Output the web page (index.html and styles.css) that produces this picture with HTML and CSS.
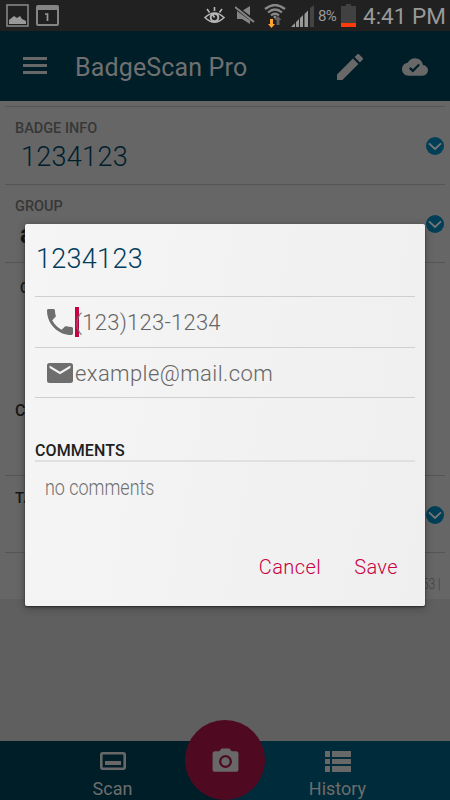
FILE: index.html
```html
<!DOCTYPE html>
<html lang="en">
<head>
    <meta charset="UTF-8">
    <meta name="viewport" content="width=device-width, initial-scale=1.0">
    <title>BadgeScan Pro</title>
    <link rel="stylesheet" href="styles.css">
</head>
<body>
    <div class="status-bar">
        <div class="status-left">
            <svg width="23" height="23" viewBox="0 0 23 23">
                <rect x="1" y="1" width="21" height="21" fill="none" stroke="#858585" stroke-width="1.6"/>
                <path d="M3 20v-4l5-4 3 2 3-2 2 3 4 2v3z" fill="#999"/>
            </svg>
            <svg width="23" height="21" viewBox="0 0 23 21">
                <rect x="1" y="1" width="21" height="19" rx="1" fill="none" stroke="#858585" stroke-width="2"/>
                <path d="M1 1h21v4H1z" fill="#858585"/>
                <path d="M9 9h2.500v7" fill="none" stroke="#999" stroke-width="1.700"/>
            </svg>
        </div>
        <div class="status-right">
            <svg class="eye" width="21" height="18" viewBox="0 0 21 18">
                <g fill="none" stroke="#b5b5b5" stroke-width="1.600">
                    <path d="M1 10.500Q10.500 1.500 20 10.500Q10.500 20 1 10.500z"/>
                    <circle cx="10.500" cy="10.500" r="3.800" stroke-width="2"/>
                    <path d="M10.500 10.500l-2-3M10.500 4V0M5.500 5.500L3 2M15.500 5.500L18 2"/>
                </g>
            </svg>
            <svg class="mute" width="20" height="18" viewBox="0 0 20 18">
                <path d="M2 5h5l8-5v18l-8-5H2z" fill="#858585"/>
                <path d="M0 1l19 14" stroke="#212121" stroke-width="4"/>
                <path d="M0 1l19 15" stroke="#858585" stroke-width="2"/>
            </svg>
            <svg class="wifi" width="22" height="24" viewBox="0 0 22 24">
                <g fill="none" stroke="#888" stroke-width="2.300">
                    <path d="M1 5q10-8 20 0M4 8.500q7-6 14 0M7 11.500q4-3.500 8 0"/>
                </g>
                <circle cx="11" cy="13" r="1.500" fill="#888"/>
                <path d="M6 15h3v5h2l-3.500 4L4 20h2z" fill="#ffa42d"/>
                <path d="M12.500 21v-5h-2l3.500-4 3.500 4h-2v5z" fill="#606060"/>
            </svg>
            <svg class="signal" width="23" height="22" viewBox="0 0 23 22">
                <path d="M0 22l4-4v4zM5 17l3-3v8H5zM9 13l3-3v12H9zM13.500 9l3.500-3.500V22h-3.500z" fill="#999"/>
                <path d="M19 3l4-3v22h-4z" fill="#444"/>
            </svg>
            <span class="percent">8%</span>
            <svg class="battery" width="15" height="23" viewBox="0 0 15 23">
                <path d="M5 0h5v2h5v21H0V2h5z" fill="#414141"/>
                <path d="M0 19h15v4H0z" fill="#ff3b0a"/>
            </svg>
            <span class="clock">4:41 PM</span>
        </div>
    </div>

    <header class="app-bar">
        <svg class="menu-icon" width="24" height="17" viewBox="0 0 24 17">
            <path d="M0 0h24v3H0zM0 7h24v3H0zM0 14h24v3H0z" fill="#686868"/>
        </svg>
        <h1>BadgeScan Pro</h1>
        <svg class="edit-icon" width="26" height="26" viewBox="3 3 18 18">
            <path d="M3 17.250V21h3.750L17.810 9.940l-3.750-3.750L3 17.250zM20.710 7.040a1 1 0 0 0 0-1.410l-2.340-2.340a1 1 0 0 0-1.410 0l-1.830 1.830 3.750 3.750 1.830-1.830z" fill="#686868"/>
        </svg>
        <svg class="cloud-icon" width="26" height="26" viewBox="0 0 24 24">
            <path d="M19.350 10.040C18.670 6.590 15.640 4 12 4 9.110 4 6.600 5.640 5.350 8.040 2.340 8.360 0 10.910 0 14c0 3.310 2.690 6 6 6h13c2.760 0 5-2.240 5-5 0-2.640-2.050-4.780-4.650-4.960zM10 17l-3.500-3.500 1.410-1.410L10 14.170 15.180 9l1.410 1.410L10 17z" fill="#686868"/>
        </svg>
    </header>

    <main class="content">
        <section class="row badge-row">
            <div>
                <div class="row-label">BADGE INFO</div>
                <div class="badge-number">1234123</div>
            </div>
            <svg class="chevron" width="18" height="18" viewBox="0 0 18 18"><circle cx="9" cy="9" r="9" fill="#003f57"/><path d="M3 6.300L9 12l6-5.700" fill="none" stroke="#777" stroke-width="1.800"/></svg>
        </section>
        <section class="row group-row">
            <div>
                <div class="row-label">GROUP</div>
                <div class="group-name">a</div>
            </div>
            <svg class="chevron" width="18" height="18" viewBox="0 0 18 18"><circle cx="9" cy="9" r="9" fill="#003f57"/><path d="M3 6.300L9 12l6-5.700" fill="none" stroke="#777" stroke-width="1.800"/></svg>
        </section>
        <section class="row contact-row">
            <div>
                <div class="contact-label">C</div>
                <div class="comment-label">C</div>
            </div>
        </section>
        <section class="row tag-row">
            <div class="tag-label">TA</div>
            <svg class="chevron" width="18" height="18" viewBox="0 0 18 18"><circle cx="9" cy="9" r="9" fill="#003f57"/><path d="M3 6.300L9 12l6-5.700" fill="none" stroke="#777" stroke-width="1.800"/></svg>
        </section>
        <div class="timestamp"><span>53 |</span></div>
    </main>

    <nav class="tabs">
        <div class="tab scan">
            <svg width="26" height="18" viewBox="0 0 26 18">
                <rect x="1.300" y="1.300" width="23.400" height="15.400" rx="1.500" fill="none" stroke="#686868" stroke-width="2.600"/>
                <path d="M5 9h16v4H5z" fill="#686868"/>
            </svg>
            <span>Scan</span>
        </div>
        <div class="tab history">
            <svg width="26" height="21" viewBox="0 0 26 21">
                <path d="M0 0h5v6H0zM7 0h19v6H7zM0 8h5v5H0zM7 8h19v5H7zM0 15h5v6H0zM7 15h19v6H7z" fill="#686868"/>
            </svg>
            <span>History</span>
        </div>
        <div class="camera">
            <svg width="31" height="31" viewBox="0 0 24 24">
                <path d="M9 2L7.170 4H4a2 2 0 0 0-2 2v12a2 2 0 0 0 2 2h16a2 2 0 0 0 2-2V6a2 2 0 0 0-2-2h-3.170L15 2zM12 17a5 5 0 1 1 0-10 5 5 0 0 1 0 10z" fill="#686868" fill-rule="evenodd"/>
                <circle cx="12" cy="12" r="3.200" fill="#686868"/>
            </svg>
        </div>
    </nav>

    <div class="dialog">
        <h2>1234123</h2>
        <div class="field">
            <svg width="26" height="26" viewBox="3 3 18 18">
                <path d="M6.620 10.790c1.440 2.830 3.760 5.140 6.590 6.590l2.200-2.200c.27-.27.67-.36 1.020-.24 1.120.37 2.330.57 3.570.57.55 0 1 .45 1 1V20c0 .55-.45 1-1 1-9.390 0-17-7.610-17-17 0-.55.45-1 1-1h3.500c.55 0 1 .45 1 1 0 1.250.2 2.450.57 3.570.11.35.03.74-.25 1.020l-2.200 2.200z" fill="#6e6e6e"/>
            </svg>
            <span class="value phone">(123)123-1234</span>
        </div>
        <div class="field mail">
            <svg width="26" height="20" viewBox="2 4 20 16" preserveAspectRatio="none">
                <path d="M20 4H4a2 2 0 0 0-2 2v12a2 2 0 0 0 2 2h16a2 2 0 0 0 2-2V6a2 2 0 0 0-2-2zm0 4l-8 5-8-5V6l8 5 8-5v2z" fill="#6e6e6e"/>
            </svg>
            <span class="value">example@mail.com</span>
        </div>
        <h3>COMMENTS</h3>
        <p><span>no comments</span></p>
        <div class="actions">
            <span>Cancel</span>
            <span>Save</span>
        </div>
    </div>
</body>
</html>
```

FILE: styles.css
```css
:root {
    --bar: #001e28;
    --page: #666666;
    --icon: #686868;
    --line: #555555;
    --accent: #c90042;
}

* {
    margin: 0;
    padding: 0;
    box-sizing: border-box;
}

body {
    width: 450px;
    height: 800px;
    display: flex;
    flex-direction: column;
    position: relative;
    overflow: hidden;
    background: #5f5f5f;
    font-family: Roboto, sans-serif;
}

svg {
    display: block;
    flex-shrink: 0;
}

/* phone status bar */
.status-bar {
    height: 31px;
    display: flex;
    justify-content: space-between;
    padding: 4px 6px 0 6px;
    background: #212121;
    color: #999;
}

.status-left {
    display: flex;
    gap: 7px;
}

.status-left svg + svg {
    margin-top: 1px;
}

.status-right {
    display: flex;
}

.eye {
    margin: 3px 10px 0 0;
}

.mute {
    margin: 2px 9px 0 0;
}

.wifi {
    margin-right: 5px;
}

.signal {
    margin: 1px 4px 0 0;
}

.percent {
    width: 23px;
    font-size: 15px;
    line-height: 25px;
    letter-spacing: -0.6px;
    white-space: nowrap;
}

.clock {
    width: 81px;
    margin-left: 7px;
    font-size: 22.5px;
    line-height: 24px;
    white-space: nowrap;
}

/* header */
.app-bar {
    height: 70px;
    display: flex;
    align-items: center;
    padding: 0 22px 0 23px;
    background: var(--bar);
    color: #707070;
}

.menu-icon {
    margin: -1px 28px 0 0;
}

.app-bar h1 {
    flex: 1;
    font-size: 25px;
    font-weight: 400;
    line-height: 30px;
    letter-spacing: 0.15px;
    padding-top: 3px;
}

.edit-icon {
    margin: 1px 39px 0 0;
}

.cloud-icon {
    margin-top: 1px;
}

/* badge details */
.content {
    height: 498px;
    padding: 5px 5px 0;
    background: var(--page);
}

.row {
    display: flex;
    justify-content: space-between;
    padding: 0 1px 0 10px;
    border-top: 1px solid var(--line);
}

.badge-row,
.group-row {
    height: 78px;
}

.row-label {
    margin-top: 13px;
    color: #373737;
    font-size: 14.5px;
    font-weight: 500;
    line-height: 17px;
}

.badge-number {
    padding-left: 6px;
    color: #001e2c;
    font-size: 27px;
    font-weight: 350;
    line-height: 41px;
    letter-spacing: 0.3px;
}

.chevron {
    margin-top: 30px;
}

.group-name {
    padding-left: 5px;
    color: #161616;
    font-size: 25px;
    font-weight: 700;
    line-height: 39px;
}

.contact-row {
    height: 213px;
    color: #171717;
    font-size: 16px;
    font-weight: 500;
}

.contact-label {
    padding: 16px 0 0 5px;
    font-size: 14px;
    line-height: 19px;
}

.comment-label {
    padding-top: 103px;
    line-height: 20px;
}

.tag-row {
    height: 77px;
}

.tag-label {
    padding-top: 12px;
    color: #171717;
    font-size: 15px;
    font-weight: 500;
    line-height: 20px;
}

.timestamp {
    height: 46px;
    padding: 21px 4px 0;
    border-top: 1px solid var(--line);
    color: #414141;
    font-size: 15px;
    font-weight: 300;
    line-height: 20px;
    text-align: right;
}

.timestamp span {
    display: inline-block;
    transform: scaleX(0.8);
    transform-origin: right;
}

/* bottom tabs */
.tabs {
    height: 59px;
    margin-top: auto;
    display: flex;
    position: relative;
    color: #6d6d6d;
    font-size: 18px;
    line-height: 22px;
}

.tab {
    width: 50%;
    display: flex;
    flex-direction: column;
    align-items: center;
    padding-top: 11px;
    background: var(--bar);
}

.tab span {
    margin-top: 8px;
}

.history {
    padding-top: 10px;
    background: #002b3a;
}

.history span {
    margin-top: 6px;
}

.camera {
    width: 80px;
    height: 80px;
    display: flex;
    align-items: center;
    justify-content: center;
    padding-top: 3px;
    position: absolute;
    left: 185px;
    top: -21px;
    border-radius: 50%;
    background: #4f0a22;
}

/* edit popup */
.dialog {
    width: 400px;
    height: 382px;
    padding: 0 10px;
    position: absolute;
    top: 224px;
    left: 25px;
    border-radius: 2px;
    background: linear-gradient(100deg, #f5f5f5, #efefef);
    box-shadow: 0 1px 2px #292929, 0 2px 9px rgba(0, 0, 0, 0.3);
}

.dialog h2 {
    height: 72px;
    padding: 14px 0 0 1px;
    color: #003e5c;
    font-size: 27px;
    font-weight: 350;
    line-height: 43px;
    letter-spacing: 0.3px;
}

.field {
    height: 51px;
    display: flex;
    align-items: center;
    padding-left: 12px;
    border-top: 1px solid #cfcfcf;
}

.field.mail {
    border-bottom: 1px solid #cfcfcf;
}

.field svg {
    margin-right: 2px;
}

.value {
    padding-top: 2px;
    color: #666;
    font-size: 22px;
    font-weight: 350;
    line-height: 28px;
    letter-spacing: 0.4px;
}

.phone {
    letter-spacing: 0.25px;
    background: linear-gradient(var(--accent), var(--accent)) no-repeat 0 0 / 4px 100%;
}

.dialog h3 {
    height: 64px;
    padding-top: 42px;
    border-bottom: 2px solid #e0e0e0;
    color: #202020;
    font-size: 16px;
    font-weight: 500;
    line-height: 21px;
    letter-spacing: 0.1px;
}

.dialog p {
    padding: 12px 10px 0;
    color: #707070;
    font-size: 22px;
    font-weight: 300;
    line-height: 28px;
}

.dialog p span {
    display: inline-block;
    transform: scaleX(0.815);
    transform-origin: left;
}

.actions {
    display: flex;
    justify-content: flex-end;
    gap: 33px;
    padding: 50px 17px 0 0;
    color: var(--accent);
    font-size: 20px;
    font-weight: 350;
    line-height: 30px;
    letter-spacing: 0.4px;
}
```
